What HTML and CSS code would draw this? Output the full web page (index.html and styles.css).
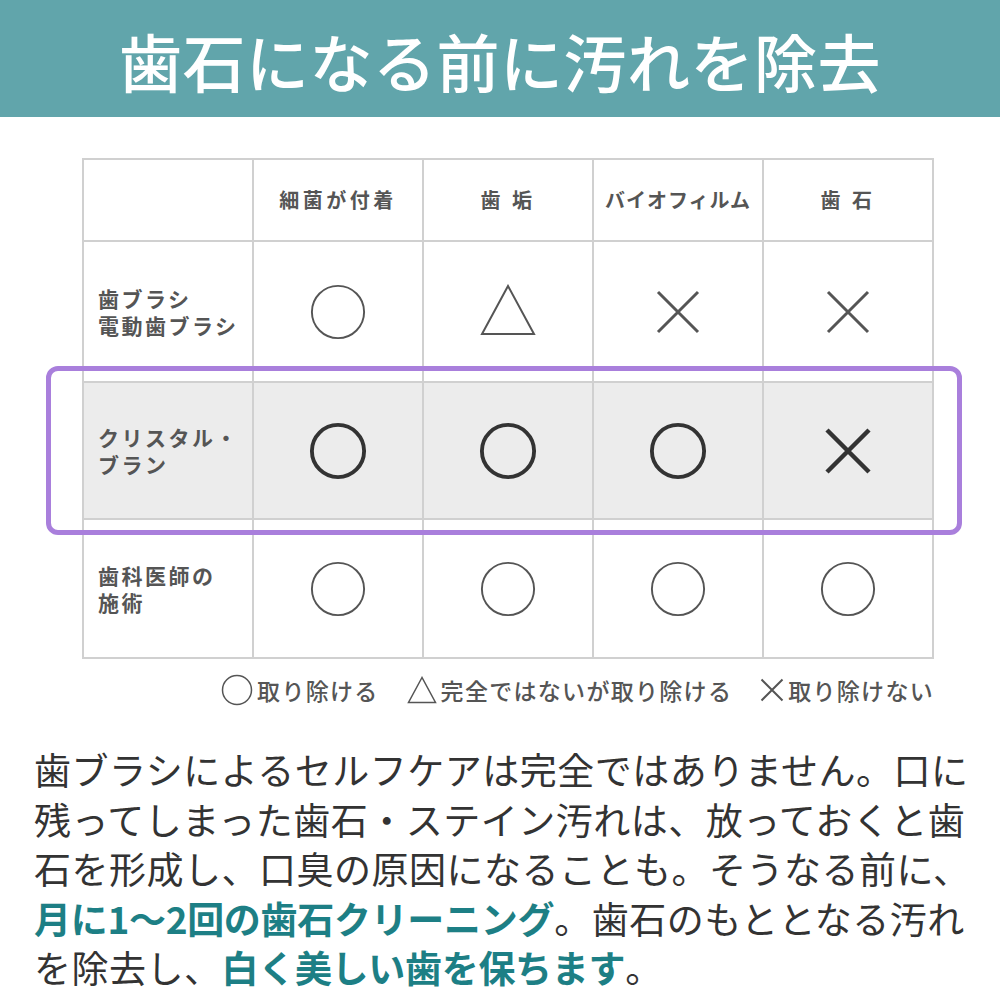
FILE: index.html
```html
<!DOCTYPE html>
<html lang="ja">
<head>
<meta charset="utf-8">
<link rel="stylesheet" href="styles.css">
</head>
<body>
<header class="banner"><h1>歯石になる前に汚れを除去</h1></header>

<section class="compare">
  <div class="grid">
    <div class="cell head"></div>
    <div class="cell head">細菌が付着</div>
    <div class="cell head">歯 垢</div>
    <div class="cell head narrow">バイオフィルム</div>
    <div class="cell head">歯 石</div>

    <div class="cell label">歯ブラシ<br>電動歯ブラシ</div>
    <div class="cell mark"><svg class="m-circle" viewBox="0 0 60 60"><circle cx="30" cy="30" r="27"/></svg></div>
    <div class="cell mark"><svg class="m-tri" viewBox="0 0 56 52"><polygon points="28,2 2,50 54,50"/></svg></div>
    <div class="cell mark"><svg class="m-x" viewBox="0 0 44 44"><path d="M2 2L42 42M42 2L2 42"/></svg></div>
    <div class="cell mark"><svg class="m-x" viewBox="0 0 44 44"><path d="M2 2L42 42M42 2L2 42"/></svg></div>

    <div class="cell label hl">クリスタル・<br>ブラン</div>
    <div class="cell mark hl"><svg class="m-circle strong" viewBox="0 0 60 60"><circle cx="30" cy="30" r="27"/></svg></div>
    <div class="cell mark hl"><svg class="m-circle strong" viewBox="0 0 60 60"><circle cx="30" cy="30" r="27"/></svg></div>
    <div class="cell mark hl"><svg class="m-circle strong" viewBox="0 0 60 60"><circle cx="30" cy="30" r="27"/></svg></div>
    <div class="cell mark hl"><svg class="m-x strong" viewBox="0 0 48 48"><path d="M3 3L45 45M45 3L3 45"/></svg></div>

    <div class="cell label">歯科医師の<br>施術</div>
    <div class="cell mark"><svg class="m-circle" viewBox="0 0 60 60"><circle cx="30" cy="30" r="27"/></svg></div>
    <div class="cell mark"><svg class="m-circle" viewBox="0 0 60 60"><circle cx="30" cy="30" r="27"/></svg></div>
    <div class="cell mark"><svg class="m-circle" viewBox="0 0 60 60"><circle cx="30" cy="30" r="27"/></svg></div>
    <div class="cell mark"><svg class="m-circle" viewBox="0 0 60 60"><circle cx="30" cy="30" r="27"/></svg></div>
  </div>
  <div class="highlight"></div>
</section>

<div class="legend">
  <span class="item"><svg class="l-circle" viewBox="0 0 32 32"><circle cx="16" cy="16" r="14.5"/></svg>取り除ける</span>
  <span class="item"><svg class="l-tri" viewBox="0 0 30 28"><polygon points="15,1.5 1.5,26.5 28.5,26.5"/></svg>完全ではないが取り除ける</span>
  <span class="item"><svg class="l-x" viewBox="0 0 24 24"><path d="M1.5 1.5L22.5 22.5M22.5 1.5L1.5 22.5"/></svg>取り除けない</span>
</div>

<p class="copy">歯ブラシによるセルフケアは完全ではありません。口に<br>残ってしまった歯石・ステイン汚れは、放っておくと歯<br>石を形成し、口臭の原因になることも。そうなる前に、<br><strong>月に1〜2回の歯石クリーニング</strong>。歯石のもととなる汚れ<br>を除去し、<strong>白く美しい歯を保ちます</strong>。</p>
</body>
</html>
```

FILE: styles.css
```css
html, body {
  margin: 0;
  padding: 0;
  background: #ffffff;
}
body {
  font-family: "Noto Sans CJK JP", "Noto Sans", sans-serif;
  color: #555555;
  width: 1000px;
}
.banner {
  background: #61a5ab;
  height: 117px;
  display: flex;
  align-items: center;
  justify-content: center;
}
.banner h1 {
  margin: 0;
  color: #ffffff;
  font-size: 63px;
  font-weight: 500;
  line-height: 1;
  letter-spacing: 0.5px;
  padding-top: 2px;
}
.compare {
  position: relative;
  margin: 41px 0 0 82px;
  width: 852px;
}
.grid {
  display: grid;
  grid-template-columns: repeat(5, 168px);
  grid-template-rows: 80px 139px 135px 137px;
  gap: 2px;
  padding: 2px;
  background: #d0d0d0;
}
.cell {
  background: #ffffff;
  display: flex;
  align-items: center;
  justify-content: center;
}
.cell.hl {
  background: #ececec;
}
.head {
  font-size: 20px;
  font-weight: 700;
  letter-spacing: 3.5px;
  color: #555555;
  padding-bottom: 2px;
}
.head.narrow {
  letter-spacing: 1px;
}
.label {
  justify-content: flex-start;
  padding-left: 14px;
  font-size: 21px;
  font-weight: 700;
  line-height: 27px;
  letter-spacing: 2.5px;
  color: #555555;
}
.mark svg {
  display: block;
  fill: none;
}
.m-circle {
  width: 58px;
  height: 58px;
  stroke: #555555;
  stroke-width: 2;
}
.m-circle.strong {
  stroke: #333333;
  stroke-width: 4;
}
.m-tri {
  width: 56px;
  height: 52px;
  stroke: #555555;
  stroke-width: 2;
  margin-bottom: 4px;
}
.m-x {
  width: 44px;
  height: 44px;
  stroke: #555555;
  stroke-width: 3;
}
.m-x.strong {
  width: 48px;
  height: 48px;
  stroke: #333333;
  stroke-width: 4.5;
}
.highlight {
  position: absolute;
  left: -36px;
  top: 208px;
  width: 906px;
  height: 159px;
  border: 5px solid #a97fdc;
  border-radius: 12px;
  pointer-events: none;
}
.legend {
  display: flex;
  justify-content: flex-end;
  gap: 28px;
  margin: 15px 66px 0 0;
  font-size: 23px;
  font-weight: 500;
  letter-spacing: 1.3px;
  color: #555555;
  line-height: 32px;
}
.legend .item {
  display: flex;
  align-items: center;
  gap: 4px;
}
.legend svg {
  display: block;
  fill: none;
  stroke: #555555;
}
.l-circle { width: 32px; height: 32px; stroke-width: 1.5; }
.l-tri { width: 30px; height: 28px; stroke-width: 1.5; }
.l-x { width: 24px; height: 24px; stroke-width: 2; }
.copy {
  margin: 39px 0 0 34px;
  font-size: 37px;
  line-height: 49.5px;
  font-weight: 400;
  letter-spacing: 0.5px;
  color: #333333;
  white-space: nowrap;
}
.copy strong {
  color: #1d7f85;
  font-weight: 700;
  letter-spacing: -0.3px;
}
```
